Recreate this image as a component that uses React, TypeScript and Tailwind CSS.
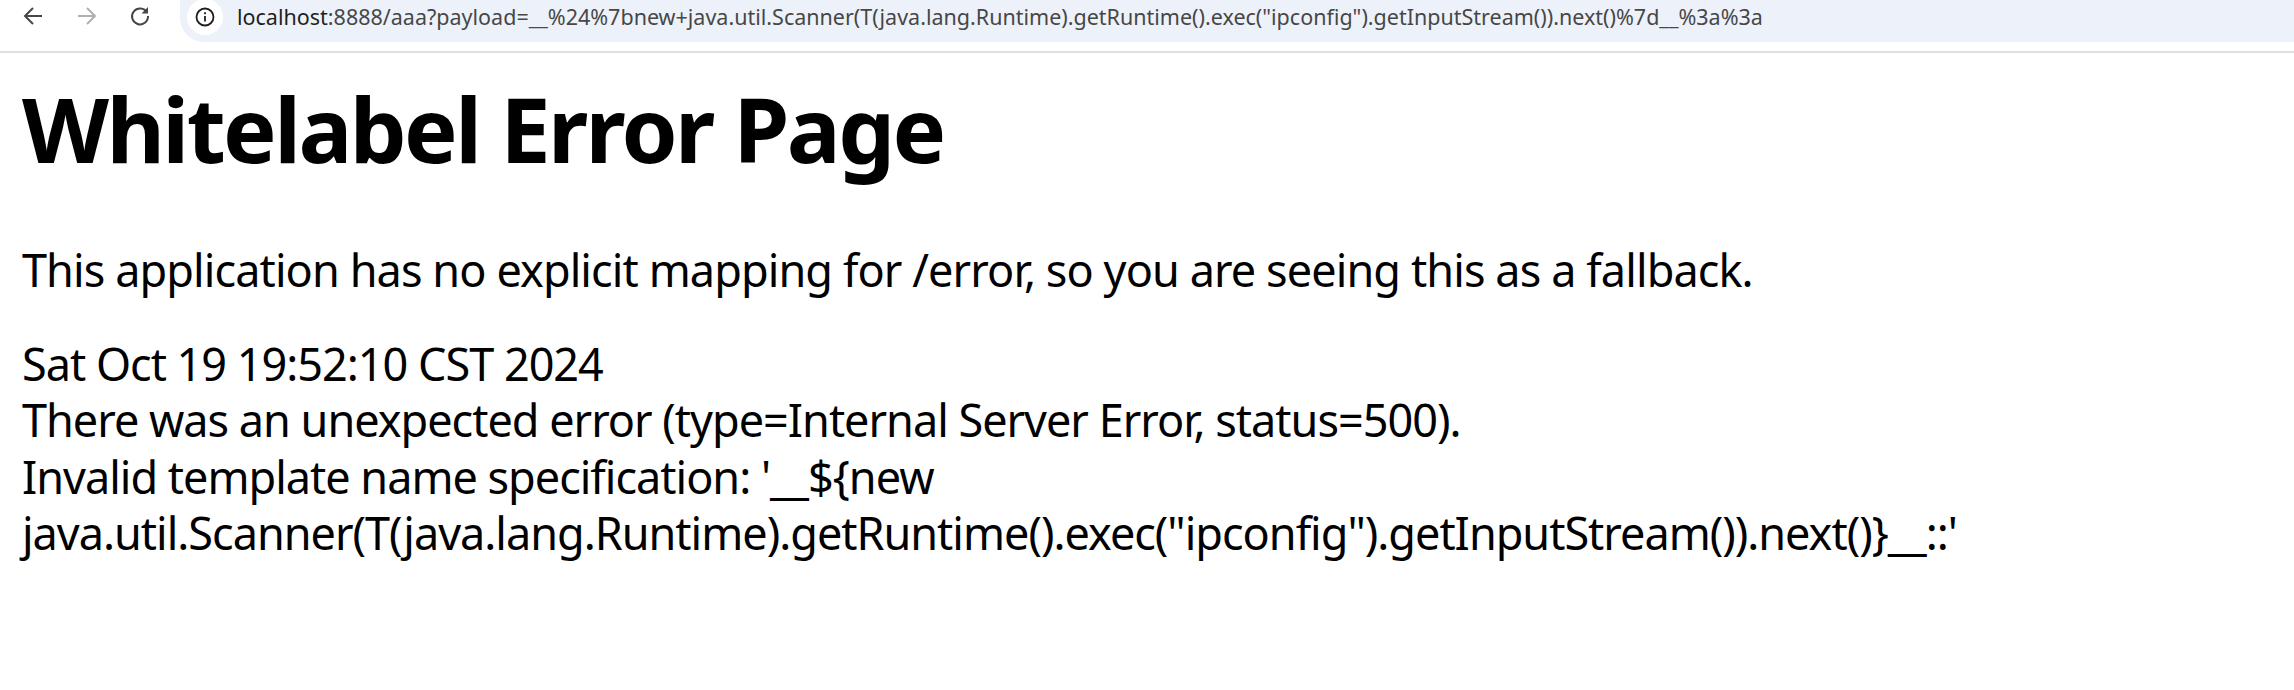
import React from 'react';

const App: React.FC = () => {
  return (
    <div className="min-h-[690px] bg-white text-black font-['Noto_Sans','Open_Sans',sans-serif]">
      {/* browser toolbar */}
      <div className="h-[53px] border-b-2 border-[#e0e0e0] flex items-start">
        <div className="flex items-center pt-[5px] pl-[22px] w-[180px] shrink-0">
          <svg width="22" height="22" viewBox="0 0 22 22" fill="none" stroke="#474747" strokeWidth="2"><path d="M20 11H3M11 3l-8 8 8 8" /></svg>
          <svg className="ml-[32px]" width="22" height="22" viewBox="0 0 22 22" fill="none" stroke="#b0b0b0" strokeWidth="2"><path d="M2 11h17M11 3l8 8-8 8" /></svg>
          <svg className="ml-[31px]" width="22" height="22" viewBox="0 0 22 22" fill="none" stroke="#474747" strokeWidth="2"><path d="M18 7.5A8 8 0 1 0 19 11" /><path d="M19 2v6.5h-6.5" fill="#474747" stroke="none" /></svg>
        </div>
        <div className="flex-1 h-[42px] bg-[#edf2fa] rounded-bl-[24px] flex items-center pl-[7px]">
          <div className="w-[36px] h-[36px] rounded-full bg-white flex items-center justify-center shrink-0 -mt-[8px]">
            <svg width="20" height="20" viewBox="0 0 20 20" fill="none" stroke="#1f1f1f" strokeWidth="1.8"><circle cx="10" cy="10" r="8.5" /><path d="M10 9v5.5M10 5.2v2" /></svg>
          </div>
          <span className="ml-[14px] -mt-[8px] text-[21.5px] leading-[26px] text-[#474747] whitespace-nowrap">
            <span className="text-[#1f1f1f]">localhost</span>
            {':8888/aaa?payload=__%24%7bnew+java.util.Scanner(T(java.lang.Runtime).getRuntime().exec("ipconfig").getInputStream()).next()%7d__%3a%3a'}
          </span>
        </div>
      </div>

      {/* error body */}
      <div className="pl-[22px] pr-[8px]">
        <h1 className="text-[90px] leading-[120px] tracking-[-2.6px] font-bold mt-[15px]">Whitelabel Error Page</h1>
        <p className="text-[45px] leading-[56.5px] tracking-[-0.9px] mt-[54px]">This application has no explicit mapping for /error, so you are seeing this as a fallback.</p>
        <div className="text-[45px] leading-[56.5px] tracking-[-1px] mt-[37px]">
          <div>Sat Oct 19 19:52:10 CST 2024</div>
          <div>There was an unexpected error (type=Internal Server Error, status=500).</div>
          <div>{"Invalid template name specification: '__${new java.util.Scanner(T(java.lang.Runtime).getRuntime().exec(\"ipconfig\").getInputStream()).next()}__::'"}</div>
        </div>
      </div>
    </div>
  );
};

export default App;
